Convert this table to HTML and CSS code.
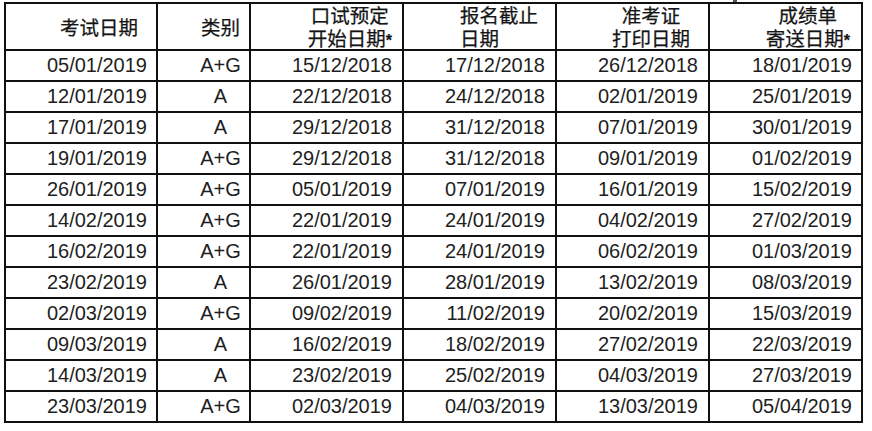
FILE: index.html
```html
<!DOCTYPE html>
<html lang="zh-CN">
<head>
<meta charset="utf-8">
<title>考试日期表</title>
<link rel="stylesheet" href="styles.css">
</head>
<body>
<span class="crop-mark"></span>
<div class="sheet">
  <div class="h c1">考试日期</div>
  <div class="h c2">类别</div>
  <div class="h c3"><div class="stack"><span class="ln">口试预定</span><span class="ln">开始日期<b>*</b></span></div></div>
  <div class="h c4"><div class="stack left"><span class="ln">报名截止</span><span class="ln">日期</span></div></div>
  <div class="h c5"><div class="stack"><span class="ln">准考证</span><span class="ln">打印日期</span></div></div>
  <div class="h c6"><div class="stack"><span class="ln">成绩单</span><span class="ln">寄送日期<b>*</b></span></div></div>

  <div class="d c1">05/01/2019</div><div class="d c2">A+G</div><div class="d c3">15/12/2018</div><div class="d c4">17/12/2018</div><div class="d c5">26/12/2018</div><div class="d c6">18/01/2019</div>
  <div class="d c1">12/01/2019</div><div class="d c2">A</div><div class="d c3">22/12/2018</div><div class="d c4">24/12/2018</div><div class="d c5">02/01/2019</div><div class="d c6">25/01/2019</div>
  <div class="d c1">17/01/2019</div><div class="d c2">A</div><div class="d c3">29/12/2018</div><div class="d c4">31/12/2018</div><div class="d c5">07/01/2019</div><div class="d c6">30/01/2019</div>
  <div class="d c1">19/01/2019</div><div class="d c2">A+G</div><div class="d c3">29/12/2018</div><div class="d c4">31/12/2018</div><div class="d c5">09/01/2019</div><div class="d c6">01/02/2019</div>
  <div class="d c1">26/01/2019</div><div class="d c2">A+G</div><div class="d c3">05/01/2019</div><div class="d c4">07/01/2019</div><div class="d c5">16/01/2019</div><div class="d c6">15/02/2019</div>
  <div class="d c1">14/02/2019</div><div class="d c2">A+G</div><div class="d c3">22/01/2019</div><div class="d c4">24/01/2019</div><div class="d c5">04/02/2019</div><div class="d c6">27/02/2019</div>
  <div class="d c1">16/02/2019</div><div class="d c2">A+G</div><div class="d c3">22/01/2019</div><div class="d c4">24/01/2019</div><div class="d c5">06/02/2019</div><div class="d c6">01/03/2019</div>
  <div class="d c1">23/02/2019</div><div class="d c2">A</div><div class="d c3">26/01/2019</div><div class="d c4">28/01/2019</div><div class="d c5">13/02/2019</div><div class="d c6">08/03/2019</div>
  <div class="d c1">02/03/2019</div><div class="d c2">A+G</div><div class="d c3">09/02/2019</div><div class="d c4">11/02/2019</div><div class="d c5">20/02/2019</div><div class="d c6">15/03/2019</div>
  <div class="d c1">09/03/2019</div><div class="d c2">A</div><div class="d c3">16/02/2019</div><div class="d c4">18/02/2019</div><div class="d c5">27/02/2019</div><div class="d c6">22/03/2019</div>
  <div class="d c1">14/03/2019</div><div class="d c2">A</div><div class="d c3">23/02/2019</div><div class="d c4">25/02/2019</div><div class="d c5">04/03/2019</div><div class="d c6">27/03/2019</div>
  <div class="d c1">23/03/2019</div><div class="d c2">A+G</div><div class="d c3">02/03/2019</div><div class="d c4">04/03/2019</div><div class="d c5">13/03/2019</div><div class="d c6">05/04/2019</div>
</div>
</body>
</html>
```

FILE: styles.css
```css
html, body {
  margin: 0;
  padding: 0;
  background: #ffffff;
}

body {
  width: 872px;
  height: 431px;
  overflow: hidden;
  position: relative;
  color: #1e1e1e;
}

.crop-mark {
  position: absolute;
  left: 733px;
  top: 0;
  width: 4px;
  height: 2px;
  background: #555;
}

.sheet {
  margin: 2px 0 0 4px;
  width: 859px;
  box-sizing: border-box;
  display: grid;
  grid-template-columns: 150px 91px 151px 151px 151px 151px;
  grid-template-rows: 45px repeat(12, 29px);
  gap: 2px;
  padding: 2px;
  background: #111;
}

.h, .d {
  background: #fff;
  display: flex;
  align-items: center;
  justify-content: flex-end;
  white-space: nowrap;
}

.h {
  font-family: "Noto Sans CJK SC", "Noto Sans", sans-serif;
  font-size: 19.5px;
  line-height: 22px;
  color: #151515;
  -webkit-text-stroke: 0.25px #151515;
}

.h b {
  font-family: "Liberation Sans", Arial, sans-serif;
  font-weight: bold;
  font-size: 16px;
}

.stack {
  display: flex;
  flex-direction: column;
  align-items: center;
  gap: 1px;
}

.stack.left {
  align-items: flex-start;
}

.ln {
  display: block;
  height: 22px;
  line-height: 22px;
}

.d {
  font-family: "Liberation Sans", Arial, sans-serif;
  font-size: 20px;
  padding-right: 9px;
}

.h.c1 { padding-right: 18px; }
.h.c2 { padding-right: 9px; }
.h.c3 { padding-right: 10px; }
.h.c4 { padding-right: 17px; }
.h.c5 { padding-right: 18px; }
.h.c6 { padding-right: 11px; }

.d.c2 {
  justify-content: center;
  padding-right: 0;
  padding-left: 34px;
}

.d.c3, .d.c4, .d.c5 { padding-right: 10px; }
```
